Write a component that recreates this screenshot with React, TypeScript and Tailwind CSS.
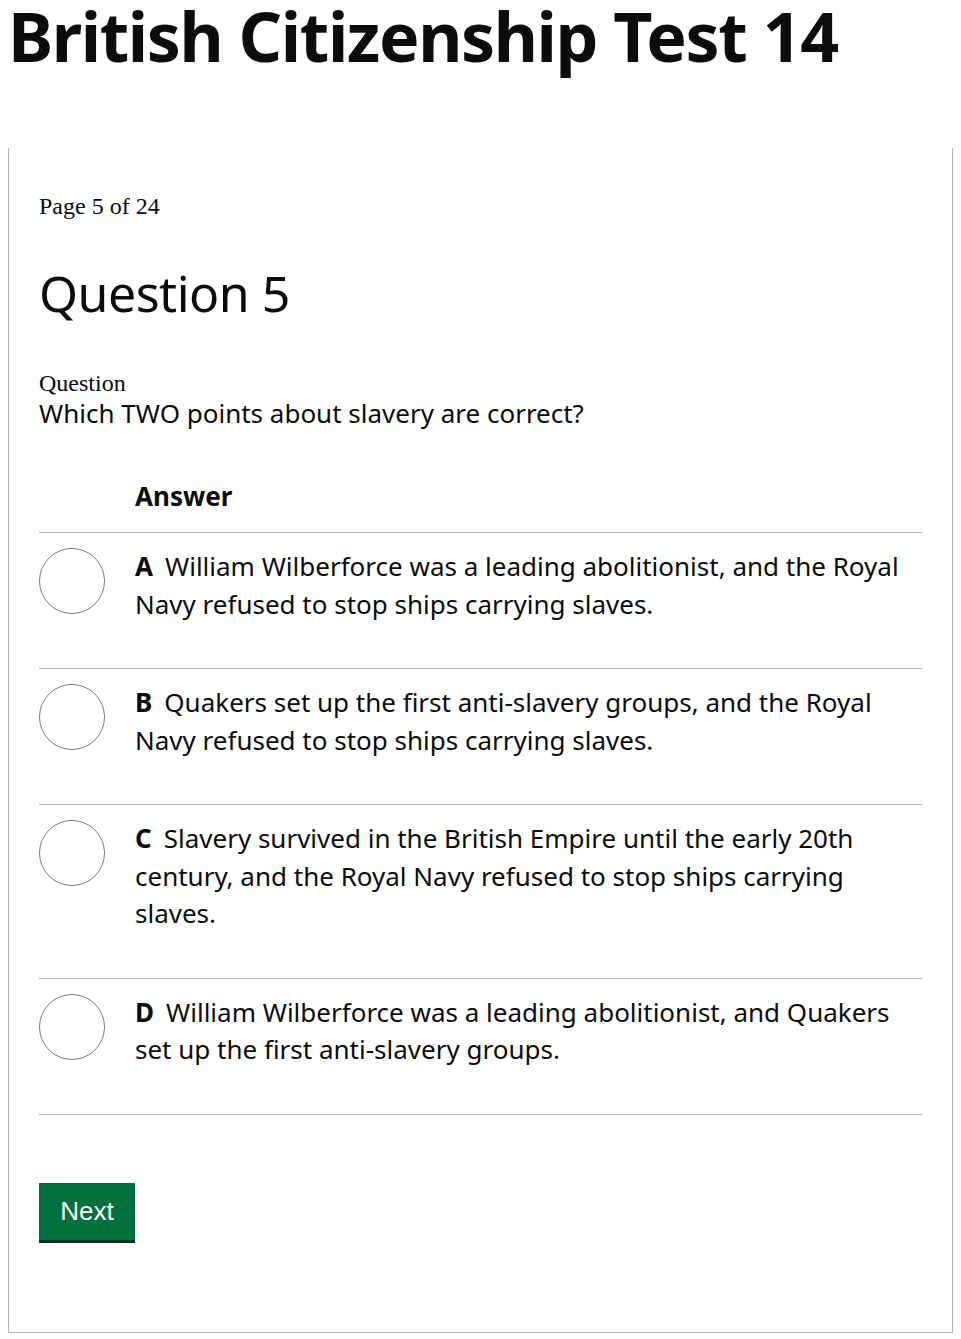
import React from "react";

const sans = "font-['Noto_Sans',sans-serif]";
const serif = "font-['Liberation_Serif',serif]";

const options = [
  { l: "A", t: "William Wilberforce was a leading abolitionist, and the Royal Navy refused to stop ships carrying slaves." },
  { l: "B", t: "Quakers set up the first anti-slavery groups, and the Royal Navy refused to stop ships carrying slaves." },
  { l: "C", t: "Slavery survived in the British Empire until the early 20th century, and the Royal Navy refused to stop ships carrying slaves." },
  { l: "D", t: "William Wilberforce was a leading abolitionist, and Quakers set up the first anti-slavery groups." },
];

export default function App() {
  return (
    <div className={`${sans} bg-white text-[#0b0c0c] w-[961px] min-h-[1339px]`}>
      <h1 className="pl-[8px] text-[68px] leading-[72px] font-bold tracking-[-1.4px] h-[148px]">
        British Citizenship Test 14
      </h1>
      <div className="mx-[8px] w-[945px] border-x border-b border-[#b1b4b6] pl-[30px] pr-[30px] pt-[44px] h-[1185px]">
        <p className={`${serif} text-[24px] leading-[28px]`}>Page 5 of 24</p>
        <h2 className="mt-[43px] text-[50px] leading-[60px] font-normal tracking-[-0.5px]">Question 5</h2>
        <p className={`${serif} mt-[47px] text-[24px] leading-[26px]`}>Question</p>
        <p className="text-[26px] leading-[34px]">Which TWO points about slavery are correct?</p>
        <div className="mt-[49px] pl-[96px] pb-[19px] text-[26px] leading-[34px] font-bold">Answer</div>
        <div className="border-t border-[#b1b4b6]">
          {options.map((o) => (
            <div key={o.l} className="flex border-b border-[#b1b4b6] pt-[15px] pb-[45px]">
              <div className="w-[96px] shrink-0">
                <div className="w-[66px] h-[66px] rounded-full border border-[#7a7a7a]" />
              </div>
              <p className="text-[26px] leading-[37.5px] pr-[10px]">
                <span className="font-bold mr-[12px]">{o.l}</span>
                {o.t}
              </p>
            </div>
          ))}
        </div>
        <button className="mt-[68px] w-[96px] h-[57px] bg-[#00703c] text-white text-[26px] leading-[57px] shadow-[0_3px_0_#002d18] font-['Liberation_Sans_Narrow','Liberation_Sans',sans-serif]">
          Next
        </button>
      </div>
    </div>
  );
}
